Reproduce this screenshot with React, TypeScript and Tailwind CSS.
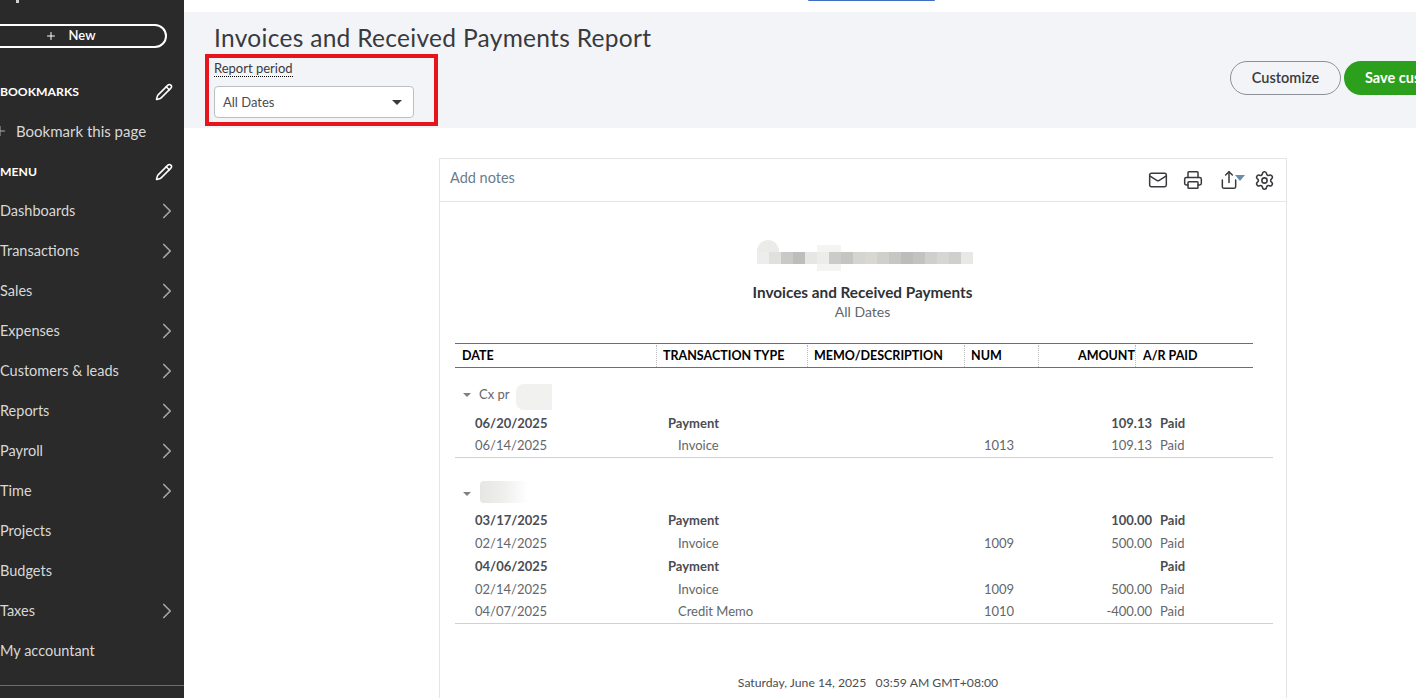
import { ChevronRight, Mail, Pencil, Plus, Printer, Settings, Share } from 'lucide-react';

const menu = [
  { label: 'Dashboards', more: true },
  { label: 'Transactions', more: true },
  { label: 'Sales', more: true },
  { label: 'Expenses', more: true },
  { label: 'Customers & leads', more: true },
  { label: 'Reports', more: true },
  { label: 'Payroll', more: true },
  { label: 'Time', more: true },
  { label: 'Projects', more: false },
  { label: 'Budgets', more: false },
  { label: 'Taxes', more: true },
  { label: 'My accountant', more: false },
];

type Row = { date: string; type: string; num?: string; amount?: string; bold?: boolean };

const groupOne: Row[] = [
  { date: '06/20/2025', type: 'Payment', amount: '109.13', bold: true },
  { date: '06/14/2025', type: 'Invoice', num: '1013', amount: '109.13' },
];

const groupTwo: Row[] = [
  { date: '03/17/2025', type: 'Payment', amount: '100.00', bold: true },
  { date: '02/14/2025', type: 'Invoice', num: '1009', amount: '500.00' },
  { date: '04/06/2025', type: 'Payment', bold: true },
  { date: '02/14/2025', type: 'Invoice', num: '1009', amount: '500.00' },
  { date: '04/07/2025', type: 'Credit Memo', num: '1010', amount: '-400.00' },
];

function SideHeading({ label }: { label: string }) {
  return (
    <div className="flex h-10 items-center justify-between pr-[11px] text-[12.2px] font-bold text-white">
      <span>{label}</span>
      <Pencil size={18} strokeWidth={2} />
    </div>
  );
}

function Sidebar() {
  return (
    <aside className="flex w-[184px] shrink-0 flex-col overflow-hidden bg-[#2a2a2a] text-[14.5px] text-[#d8d8d8]">
      {/* bottom of the logo, scrolled off the top */}
      <div className="ml-4 h-[3px] w-[3px] bg-[#cfcfcf]" />
      <div className="ml-[-27px] mt-[21px] flex h-6 w-[194px] items-center justify-center gap-3 rounded-full border-2 border-white text-[13px] font-semibold text-white">
        <Plus size={12} strokeWidth={2} />
        <span>New</span>
      </div>
      <div className="mt-6">
        <SideHeading label="BOOKMARKS" />
        <div className="ml-[-8px] flex h-10 items-center gap-2 pb-0.5">
          <Plus size={16} strokeWidth={1.5} className="text-[#a9a9a9]" />
          <span className="text-[15px]">Bookmark this page</span>
        </div>
        <SideHeading label="MENU" />
        {menu.map((m) => (
          <div key={m.label} className="flex h-10 items-center justify-between pb-0.5 pr-[4px]">
            <span>{m.label}</span>
            {m.more && <ChevronRight size={26} strokeWidth={1.6} className="text-[#a3a3a3]" />}
          </div>
        ))}
      </div>
      <div className="mt-[13px] border-t border-[#6d6d6d]" />
    </aside>
  );
}

function CompanyBlur() {
  const cells = [
    [0, '#ededeb'], [12, '#e0e0de'], [24, '#c9c9c7'], [36, '#bdbdbb'], [48, '#e6e6e4'], [60, '#ececea'],
    [72, '#cbcbc9'], [84, '#c4c4c2'], [96, '#d4d4d0'], [108, '#d8d7d2'], [120, '#cfcfcc'], [132, '#c6c6c4'],
    [144, '#bcbcba'], [156, '#c2c2c0'], [168, '#cfcfcd'], [180, '#d6d6d4'], [192, '#cfcfcd'], [204, '#e8e8e6'],
  ] as const;
  return (
    <svg width="216" height="32" viewBox="0 0 216 32" className="mx-auto block">
      <ellipse cx="11" cy="12" rx="11" ry="11" fill="#ebebe9" />
      <rect x="60" y="6" width="24" height="26" fill="#f4f4f2" />
      {cells.map(([x, c]) => (
        <rect key={x} x={x} y="13" width="12" height="12" fill={c} />
      ))}
    </svg>
  );
}

function ReportRow({ row }: { row: Row }) {
  const tone = row.bold ? 'font-bold text-[#4a4d52]' : 'text-[#63666b]';
  return (
    <div className={`grid h-[23px] grid-cols-[201px_151px_157px_74px_114px_1fr] items-center text-[13px] last:h-[22px] ${tone}`}>
      <span className="pl-5">{row.date}</span>
      <span className={`whitespace-nowrap ${row.bold ? 'pl-3' : 'pl-[22px]'}`}>{row.type}</span>
      <span />
      <span className="pl-5">{row.num}</span>
      <span className="text-right">{row.amount}</span>
      <span className="pl-2">Paid</span>
    </div>
  );
}

function GroupToggle() {
  return <span className="ml-2 h-0 w-0 border-x-4 border-t-4 border-x-transparent border-t-[#7d8084]" />;
}

function Report() {
  const headCell = 'flex items-center border-l border-dotted border-[#bbbbbb]';
  return (
    <section className="ml-[255px] mt-[30px] w-[848px] border border-b-0 border-[#e4e5e8] pb-20">
      <div className="flex h-[43px] items-center justify-between border-b border-[#e4e5e8] pl-[10px] pr-[12px]">
        <span className="pb-1 text-[14.5px] text-[#6b7c8c]">Add notes</span>
        <div className="flex items-center text-[#393a3d]">
          <Mail size={20} strokeWidth={1.8} />
          <Printer size={20} strokeWidth={1.8} className="ml-[15px]" />
          <Share size={20} strokeWidth={1.8} className="ml-[16px]" />
          <span className="mb-1 ml-[-4px] h-0 w-0 border-x-[5px] border-t-[6px] border-x-transparent border-t-[#6b8ca8]" />
          <Settings size={21} strokeWidth={1.8} className="ml-[9px] mr-[-1px]" />
        </div>
      </div>

      <div className="pl-[15px] pr-[13px] pt-[37px]">
        <div className="pl-[2px]">
          <CompanyBlur />
        </div>
        <div className="mt-[11px] pr-[3px] text-center text-[15.3px] font-bold leading-[20px] text-[#2f3135]">
          Invoices and Received Payments
        </div>
        <div className="pr-[3px] text-center text-[14px] leading-[20px] text-[#63666b]">All Dates</div>

        <div className="mt-[21px] grid h-[25px] w-[798px] grid-cols-[201px_151px_157px_74px_97px_1fr] border-y border-[#6f6f6f] pt-px text-[12.5px] font-bold text-black">
          <div className="flex items-center pl-[7px]">DATE</div>
          <div className={`${headCell} pl-[6px]`}>TRANSACTION TYPE</div>
          <div className={`${headCell} pl-[6px]`}>MEMO/DESCRIPTION</div>
          <div className={`${headCell} pl-[6px]`}>NUM</div>
          <div className={`${headCell} justify-end`}>AMOUNT</div>
          <div className={`${headCell} pl-[7px]`}>A/R PAID</div>
        </div>

        <div className="mt-[15px] flex h-6 items-center gap-2 text-[13px] text-[#63666b]">
          <GroupToggle />
          <span>Cx pr</span>
          <span className="ml-[-2px] mt-1 h-[26px] w-[36px] rounded-l-lg bg-[#f1f1f0]" />
        </div>
        <div className="mt-[5px] border-b border-[#cfd0d2]">
          {groupOne.map((r) => (
            <ReportRow key={r.date} row={r} />
          ))}
        </div>

        <div className="mt-6 flex h-6 items-center gap-[9px]">
          <GroupToggle />
          <span className="mb-1 h-[22px] w-[48px] rounded-sm bg-linear-to-r from-[#e6e6e5] via-[#efefee] to-white" />
        </div>
        <div className="mt-[3px] border-b border-[#cfd0d2]">
          {groupTwo.map((r, i) => (
            <ReportRow key={i} row={r} />
          ))}
        </div>

        <div className="mt-[50px] pl-[8px] text-center text-[12.2px] text-[#4a4d52]">
          Saturday, June 14, 2025 &nbsp; 03:59 AM GMT+08:00
        </div>
      </div>
    </section>
  );
}

export default function App() {
  return (
    <div className="flex h-screen overflow-hidden bg-white font-['Lato','Noto_Sans',sans-serif] text-[#393a3d]">
      <Sidebar />
      <main className="min-w-0 flex-1 overflow-hidden">
        <div className="h-3">
          <div className="ml-[624px] h-px w-[127px] rounded-b bg-[#3f6fc4]" />
        </div>
        <header className="relative flex h-[116px] bg-[#f3f4f8] pl-[30px]">
          <div>
            <h1 className="mt-[9px] text-[24.5px] leading-[34px] tracking-[0.3px] text-[#393a3d]">
              Invoices and Received Payments Report
            </h1>
            <div className="mt-[6px] w-fit border-b border-dotted border-black text-[13px] leading-[15px] text-[#393a3d]">
              Report period
            </div>
            <div className="mt-[9px] flex h-8 w-[200px] items-center justify-between rounded-sm border border-[#babec5] bg-white pl-2 pr-[11px] pt-px text-[13px] text-[#4a4d52]">
              <span>All Dates</span>
              <span className="h-0 w-0 border-x-[5px] border-t-[5px] border-x-transparent border-t-[#393a3d]" />
            </div>
          </div>
          <div className="ml-auto mr-[-68px] mt-[49px] flex h-[34px] gap-[3px] text-[14.5px] font-semibold">
            <div className="flex w-[111px] items-center justify-center rounded-full border border-[#8d9096] text-[#393a3d]">
              Customize
            </div>
            <div className="flex w-[140px] items-center whitespace-nowrap rounded-full bg-[#2ca01c] pl-[21px] font-bold text-white">
              Save customization
            </div>
          </div>
          <div className="absolute left-[21px] top-[42px] h-[72px] w-[233px] border-4 border-[#e8141c]" />
        </header>
        <Report />
      </main>
    </div>
  );
}
